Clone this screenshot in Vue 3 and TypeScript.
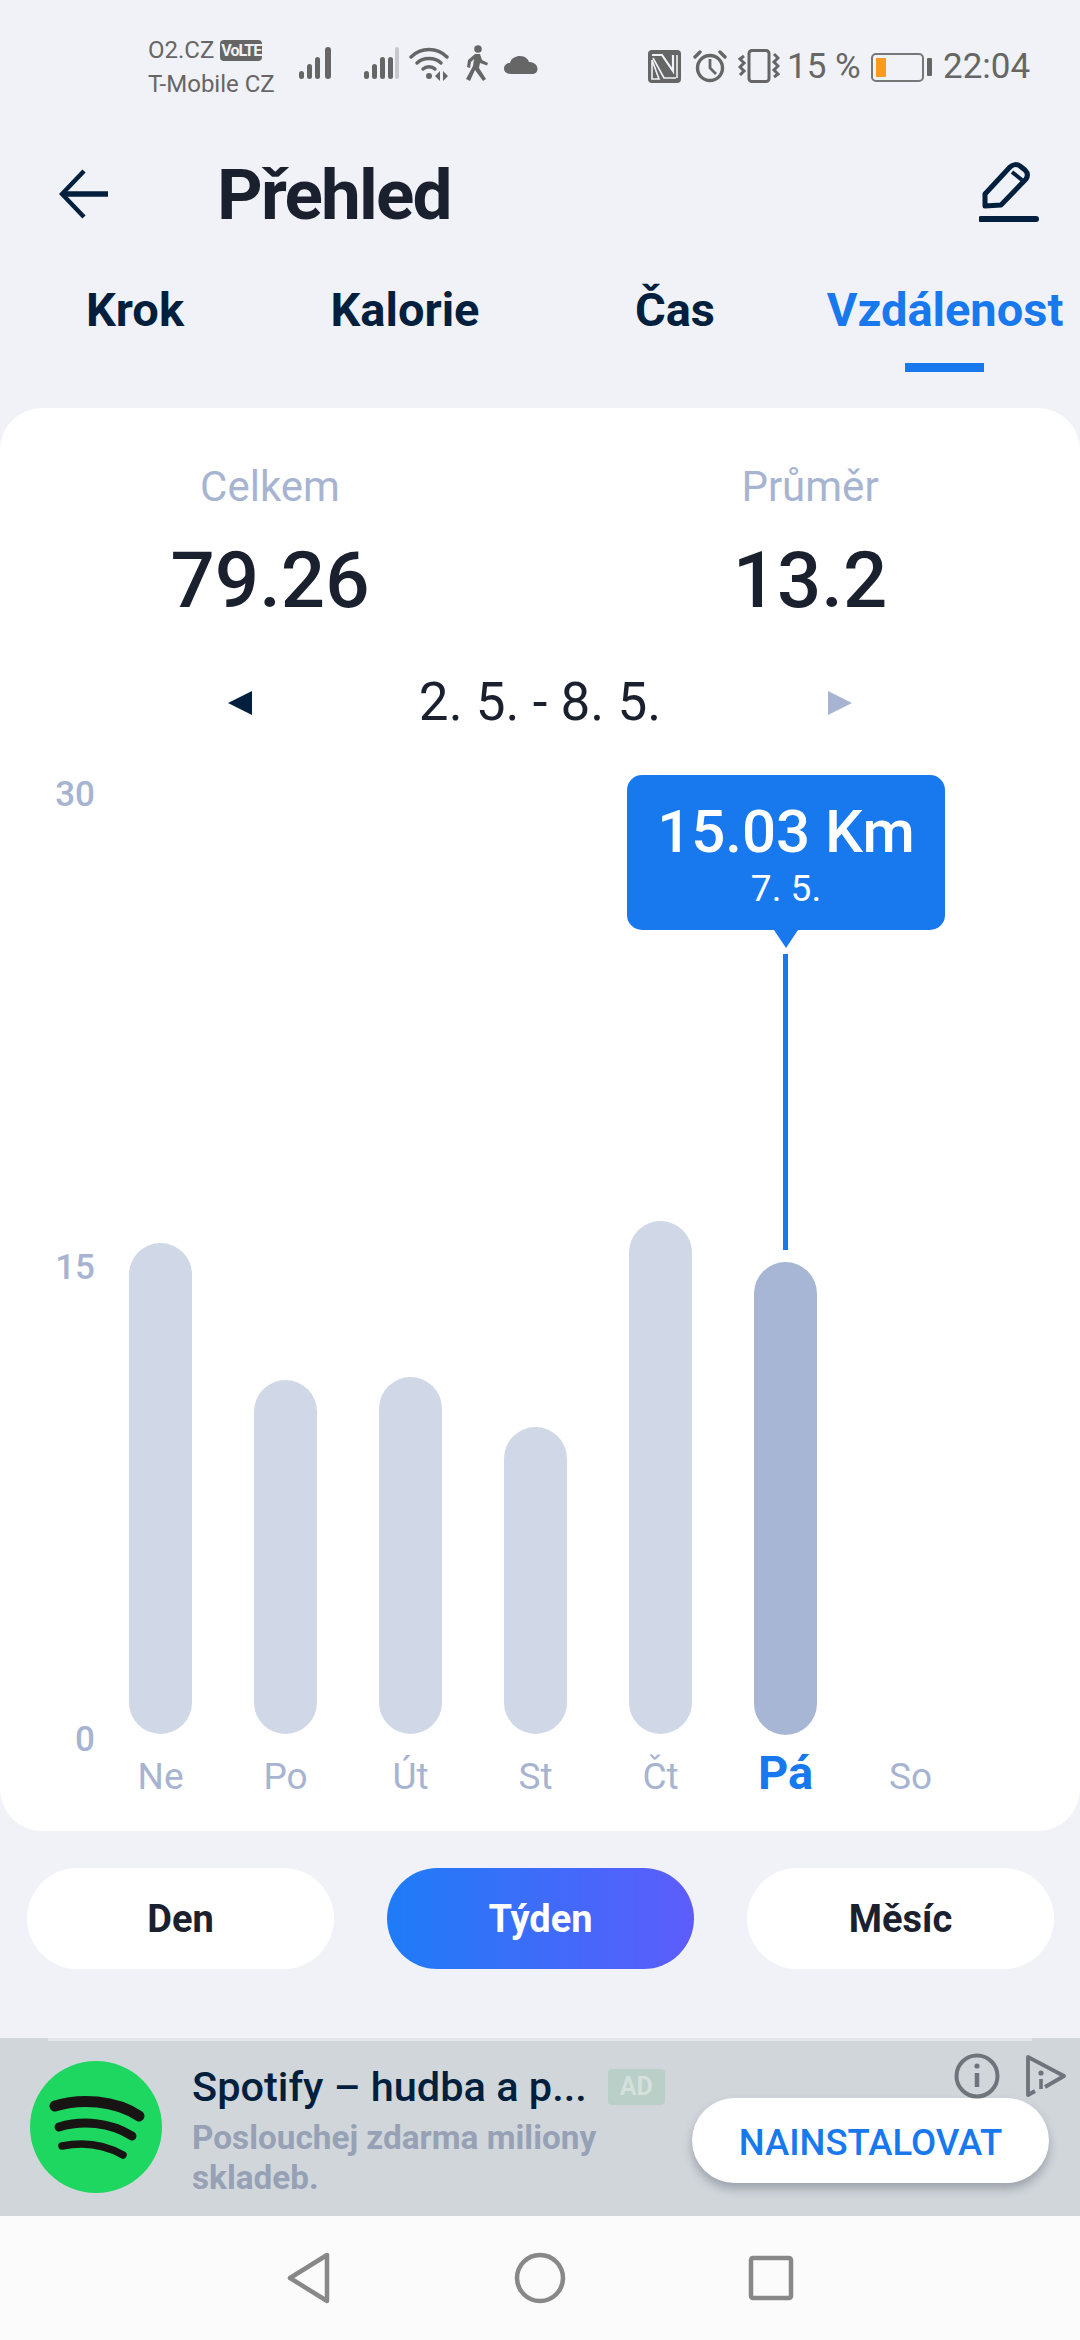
<script setup lang="ts">
interface Day { label: string; value: number; active?: boolean }
const pxPerKm = 31.5
const days: Day[] = [
  { label: 'Ne', value: 15.6 },
  { label: 'Po', value: 11.24 },
  { label: 'Út', value: 11.33 },
  { label: 'St', value: 9.76 },
  { label: 'Čt', value: 16.3 },
  { label: 'Pá', value: 15.03, active: true },
  { label: 'So', value: 0 },
]
const tabs = ['Krok', 'Kalorie', 'Čas', 'Vzdálenost']
const ranges = ['Den', 'Týden', 'Měsíc']
</script>

<template>
  <div class="page">
    <div class="status">
      <div class="carrier">
        <div class="carrier-top"><span>O2.CZ</span><b class="volte">VoLTE</b></div>
        <div class="carrier-bottom">T-Mobile CZ</div>
      </div>
      <svg class="sig sig1" width="36" height="34" viewBox="0 0 36 34" fill="#666">
        <rect x="0" y="25" width="5" height="8" rx="2.5"/><rect x="8" y="18" width="5" height="15" rx="2.5"/><rect x="16" y="11" width="5" height="22" rx="2.5"/><rect x="26" y="1" width="6" height="32" rx="3"/>
      </svg>
      <svg class="sig sig2" width="36" height="34" viewBox="0 0 36 34" fill="#666">
        <rect x="0" y="25" width="5" height="8" rx="2.5"/><rect x="8" y="18" width="5" height="15" rx="2.5"/><rect x="16" y="11" width="5" height="22" rx="2.5"/><rect x="31" y="1" width="4" height="32" rx="2" fill="#c6c8cc"/><rect x="24" y="11" width="5" height="22" rx="2.5"/>
      </svg>
      <svg class="wifi" width="40" height="34" viewBox="0 0 40 34" fill="none" stroke="#666" stroke-width="3.4" stroke-linecap="round">
        <path d="M2 10 C12 0 28 0 38 10"/>
        <path d="M8 16 C14 10 26 10 32 16"/>
        <path d="M14 22 C17 19 23 19 26 22"/>
        <circle cx="20" cy="29" r="3" fill="#666" stroke="none"/>
        <path d="M31 24 L26 29 L31 34 Z M34 24 L39 29 L34 34 Z" fill="#666" stroke="none"/>
      </svg>
      <svg class="walk" width="24" height="36" viewBox="0 0 24 36" fill="#666">
        <circle cx="13" cy="4" r="3.8"/>
        <path d="M10 9 L15 9 L17 15 L23 18 L22 20.5 L15 18 L14 23 L21 34 L18 36 L10 25 L5 36 L1 34 L8 21 L9 14 L6 17 L5 23 L2 22 L3 15 Z"/>
      </svg>
      <svg class="cloud" width="34" height="20" viewBox="0 0 34 20" fill="#666">
        <path d="M7 19 C2 19 0 16 0 13.500 C0 10 3 8 6 8 C7 3 12 1 16 1 C21 1 24 4 25 7 C30 7 33.500 10 33.500 14 C33.500 17 31 19 28 19 Z"/>
      </svg>
      <svg class="nfc" width="33" height="33" viewBox="0 0 33 33" fill="none">
        <rect width="33" height="33" rx="4" fill="#666"/>
        <path d="M4 5 H14 L25 21 V5" stroke="#f0f2f7" stroke-width="2.200"/>
        <path d="M5 8 L16 28 H28 M29 5 V28" stroke="#f0f2f7" stroke-width="1.600"/>
        <path d="M4 10 V29 H11 L4 10" stroke="#f0f2f7" stroke-width="1.600"/>
      </svg>
      <svg class="alarm" width="34" height="34" viewBox="0 0 34 34" fill="none" stroke="#666" stroke-width="3.400">
        <circle cx="17" cy="19" r="12.500"/>
        <path d="M17 10 V19 L23 25" stroke-width="2.800"/>
        <path d="M2 8 L7 3 M32 8 L27 3" stroke-linecap="round"/>
      </svg>
      <svg class="vibrate" width="42" height="34" viewBox="0 0 42 34" fill="none" stroke="#666">
        <rect x="11" y="1.500" width="20" height="31" rx="3" stroke-width="3"/>
        <path d="M6 7 L2 10 L6 14 L2 18 L6 22 L2 26" stroke-width="3"/>
        <path d="M36 5 L40 9 L36 13 L40 17 L36 21 L40 25 L36 28" stroke-width="3"/>
      </svg>
      <span class="pct">15 %</span>
      <div class="battery"><div class="battery-fill"></div></div>
      <div class="nub"></div>
      <span class="time">22:04</span>
    </div>

    <header class="header">
      <svg class="back" width="50" height="50" viewBox="0 0 50 50" fill="none" stroke="#021f3d" stroke-width="5.500">
        <path d="M49 25 H4"/>
        <path d="M25 2 L3 25 L25 48" stroke-width="4.500"/>
      </svg>
      <h1 class="title">Přehled</h1>
      <svg class="pen" width="60" height="62" viewBox="0 0 60 62" fill="none" stroke="#021f3d" stroke-width="5" stroke-linejoin="round">
        <path d="M6 33 L31 6 C34 3 38 3 41 5 L46 9 C49 12 49 15 47 18 L22 44 L6 45 Z"/>
        <path d="M33 11 L43 19" stroke-width="4"/>
        <path d="M2 58 H57" stroke-width="6" stroke-linecap="round"/>
      </svg>
    </header>

    <nav class="tabs">
      <div v-for="t in tabs" :key="t" class="tab" :class="{ on: t === 'Vzdálenost' }">
        <span>{{ t }}</span>
        <i v-if="t === 'Vzdálenost'" class="tab-line"></i>
      </div>
    </nav>

    <section class="card">
      <div class="stats">
        <div class="stat"><div class="stat-label">Celkem</div><div class="stat-value">79.26</div></div>
        <div class="stat"><div class="stat-label">Průměr</div><div class="stat-value">13.2</div></div>
      </div>
      <div class="dates">
        <i class="tri tri-left"></i>
        <span>2. 5. - 8. 5.</span>
        <i class="tri tri-right"></i>
      </div>
      <div class="chart">
        <div class="axis"><span>30</span><span>15</span><span>0</span></div>
        <div class="cols">
          <div v-for="d in days" :key="d.label" class="col" :class="{ on: d.active }">
            <div class="bar-slot">
              <div v-if="d.value" class="bar" :style="{ height: d.value * pxPerKm + 'px' }"></div>
            </div>
            <div class="day">{{ d.label }}</div>
          </div>
        </div>
        <div class="tip">
          <div class="tip-main">15.03 Km</div>
          <div class="tip-sub">7. 5.</div>
          <i class="tip-arrow"></i>
        </div>
        <i class="tip-line"></i>
      </div>
    </section>

    <div class="ranges">
      <div v-for="r in ranges" :key="r" class="range" :class="{ on: r === 'Týden' }">{{ r }}</div>
    </div>

    <aside class="ad">
      <i class="ad-rule"></i>
      <svg class="spotify" width="132" height="132" viewBox="0 0 132 132" fill="none" stroke="#191414" stroke-linecap="round">
        <circle cx="66" cy="66" r="66" fill="#1ed760" stroke="none"/>
        <path d="M25 45 C50 37 85 39 109 55" stroke-width="11"/>
        <path d="M29 66 C52 59 80 61 102 75" stroke-width="9"/>
        <path d="M32 85 C52 81 72 82 93 94" stroke-width="7.500"/>
      </svg>
      <div class="ad-text">
        <div class="ad-title"><span>Spotify – hudba a p...</span><b class="ad-badge">AD</b></div>
        <div class="ad-sub">Poslouchej zdarma miliony skladeb.</div>
      </div>
      <div class="install">NAINSTALOVAT</div>
      <svg class="info" width="46" height="46" viewBox="0 0 46 46" fill="none" stroke="#6e737c" stroke-width="4">
        <circle cx="23" cy="23" r="20.500"/>
        <path d="M23 20 V34" stroke-width="4.500"/>
        <circle cx="23" cy="13" r="2.600" fill="#6e737c" stroke="none"/>
      </svg>
      <svg class="choice" width="42" height="44" viewBox="0 0 42 44" fill="none" stroke="#6e737c" stroke-width="3.800" stroke-linejoin="round">
        <path d="M10 37 L3 41 V3 L39 22 L20 33"/>
        <path d="M16 25 V35" stroke-width="3.600"/>
        <circle cx="16" cy="19" r="2.600" fill="#6e737c" stroke="none"/>
      </svg>
    </aside>

    <footer class="nav">
      <svg width="46" height="52" viewBox="0 0 46 52" fill="none" stroke="#888" stroke-width="4.500" stroke-linejoin="round"><path d="M41 3 V49 L4 26 Z"/></svg>
      <svg width="52" height="52" viewBox="0 0 52 52" fill="none" stroke="#888" stroke-width="4.500"><circle cx="26" cy="26" r="23"/></svg>
      <svg width="46" height="46" viewBox="0 0 46 46" fill="none" stroke="#888" stroke-width="4.500" stroke-linejoin="round"><rect x="3" y="3" width="40" height="40" rx="2"/></svg>
    </footer>
  </div>
</template>

<style scoped>
.page {
  position: relative;
  width: 1080px;
  height: 2340px;
  overflow: hidden;
  background: #f0f2f7;
  font-family: Roboto, "Liberation Sans", sans-serif;
  color: #1a202e;
  display: flex;
  flex-direction: column;
}
.status {
  height: 130px;
  box-sizing: border-box;
  padding: 0 0 0 148px;
  display: flex;
  align-items: center;
  color: #666;
}
.status svg { flex: none; }
.carrier { width: 151px; font-size: 24px; line-height: 34px; margin-top: 4px; }
.carrier-top { display: flex; align-items: center; gap: 6px; }
.volte {
  background: #666;
  color: #f0f2f7;
  font-size: 16px;
  font-weight: 700;
  line-height: 21px;
  height: 21px;
  width: 42px;
  text-align: center;
  border-radius: 4px;
  letter-spacing: -1px;
  overflow: hidden;
  white-space: nowrap;
}
.sig { margin-top: -4px; }
.sig2 { margin-left: 29px; }
.wifi { margin-left: 9px; margin-top: -2px; }
.walk { margin-left: 16px; margin-top: -4px; }
.cloud { margin-left: 15px; margin-top: -1px; }
.nfc { margin-left: 110px; margin-top: 2px; }
.alarm { margin-left: 12px; margin-top: 2px; }
.vibrate { margin-left: 11px; margin-top: 2px; }
.pct { margin-left: 7px; font-size: 35px; margin-top: 2px; width: 76px; white-space: nowrap; }
.battery {
  width: 53px;
  height: 29px;
  box-sizing: border-box;
  border: 2px solid #777;
  border-radius: 5px;
  padding: 3px;
  margin-left: 8px;
  margin-top: 4px;
}
.battery-fill { width: 10px; height: 100%; background: #fb9a1b; }
.nub { width: 5px; height: 18px; background: #666; margin-left: 3px; margin-top: 4px; border-radius: 1px; }
.time { margin-left: 11px; font-size: 35px; margin-top: 2px; }

.header {
  height: 128px;
  box-sizing: border-box;
  position: relative;
  display: flex;
  align-items: center;
  padding: 0 41px 0 59px;
  flex: none;
}
.pen { margin-top: -4px; }
.title {
  margin: 0 0 0 108px;
  font-size: 71px;
  font-weight: 700;
  letter-spacing: -1.8px;
  flex: 1;
  color: #1a202e;
  line-height: 1;
}
.tabs {
  height: 150px;
  display: grid;
  grid-template-columns: repeat(4, 270px);
  flex: none;
}
.tab {
  position: relative;
  text-align: center;
  font-size: 47px;
  font-weight: 700;
  color: #021f3d;
  line-height: 50px;
  padding-top: 27px;
  white-space: nowrap;
}
.tab.on { color: #1878ee; }
.tab-line {
  position: absolute;
  left: 95px;
  top: 105px;
  width: 79px;
  height: 9px;
  background: #1878ee;
}
.card {
  flex: none;
  height: 1423px;
  box-sizing: border-box;
  background: #fff;
  border-radius: 42px;
  display: flex;
  flex-direction: column;
}
.stats {
  display: grid;
  grid-template-columns: 540px 540px;
  padding-top: 56px;
}
.stat { text-align: center; }
.stat-label { font-size: 42px; line-height: 46px; color: #a7b4d1; }
.stat-value { font-size: 78px; font-weight: 500; line-height: 90px; margin-top: 26px; color: #1a202e; }
.dates {
  margin-top: 46px;
  height: 60px;
  display: flex;
  align-items: center;
  justify-content: center;
  font-size: 53px;
  color: #1a202e;
}
.dates span { width: 576px; text-align: center; }
.tri { width: 0; height: 0; border-top: 12px solid transparent; border-bottom: 12px solid transparent; margin-top: 2px; }
.tri-left { border-right: 24px solid #021f3d; }
.tri-right { border-left: 24px solid #a7b4d1; }
.chart {
  position: relative;
  display: flex;
  margin-top: 41px;
  height: 1026px;
}
.axis {
  width: 95px;
  height: 985px;
  margin-top: 2px;
  text-align: right;
  display: flex;
  flex-direction: column;
  justify-content: space-between;
  font-size: 35px;
  font-weight: 500;
  line-height: 40px;
  color: #a7b4d1;
  flex: none;
}
.cols { display: flex; margin-left: 3px; }
.col { width: 125px; display: flex; flex-direction: column; align-items: center; }
.bar-slot { height: 962px; width: 63px; display: flex; align-items: flex-end; }
.bar { width: 63px; background: #d0d7e6; border-radius: 32px; }
.col.on .bar { background: #a8b6d6; }
.day {
  font-size: 37px;
  line-height: 44px;
  margin-top: 21px;
  color: #a7b4d1;
}
.col.on .day { color: #1878ee; font-size: 47px; font-weight: 700; margin-top: 15px; line-height: 46px; }
.tip {
  position: absolute;
  left: 627px;
  top: 2px;
  width: 318px;
  height: 155px;
  box-sizing: border-box;
  background: #1878ee;
  border-radius: 15px;
  color: #fff;
  text-align: center;
}
.tip-main { font-size: 60px; font-weight: 500; line-height: 68px; padding-top: 23px; }
.tip-sub { font-size: 37px; line-height: 42px; margin-top: 2px; }
.tip-arrow {
  position: absolute;
  left: 147px;
  top: 155px;
  width: 0;
  height: 0;
  border-left: 12px solid transparent;
  border-right: 12px solid transparent;
  border-top: 18px solid #1878ee;
}
.tip-line { position: absolute; left: 783px; top: 181px; width: 5px; height: 296px; background: #1878ee; }

.ranges {
  flex: none;
  display: grid;
  grid-template-columns: repeat(3, 307px);
  gap: 53px;
  padding: 37px 0 0 27px;
  height: 207px;
  box-sizing: border-box;
}
.range {
  height: 101px;
  background: #fff;
  border-radius: 51px;
  display: flex;
  align-items: center;
  justify-content: center;
  font-size: 38px;
  font-weight: 700;
  color: #1a202e;
}
.range.on { background: linear-gradient(90deg, #1e7cf7, #5d5cfb); color: #fff; }

.ad {
  position: relative;
  flex: none;
  height: 178px;
  background: #d1d6db;
  display: flex;
  align-items: center;
}
.ad-rule { position: absolute; left: 48px; top: 0; width: 984px; height: 3px; background: #e2e6ec; }
.spotify { margin-left: 30px; flex: none; }
.ad-text { margin-left: 30px; width: 480px; margin-top: 3px; }
.ad-title { display: flex; align-items: center; font-size: 41.500px; font-weight: 500; color: #021f3d; line-height: 56px; white-space: nowrap; }
.ad-badge {
  margin-left: 21px;
  width: 57px;
  height: 36px;
  background: #b9cfc7;
  color: #d5dfdc;
  border-radius: 4px;
  font-size: 25px;
  font-weight: 700;
  line-height: 36px;
  text-align: center;
}
.ad-sub { width: 440px; font-size: 33.300px; font-weight: 700; line-height: 40px; color: #97a1b5; margin-top: 3px; }
.install {
  position: absolute;
  left: 692px;
  top: 60px;
  width: 357px;
  height: 85px;
  box-sizing: border-box;
  padding-top: 3px;
  background: #fff;
  border-radius: 43px;
  box-shadow: 0 6px 10px rgba(60, 70, 85, 0.35);
  color: #1878ee;
  font-size: 36.500px;
  font-weight: 500;
  display: flex;
  align-items: center;
  justify-content: center;
}
.info { position: absolute; left: 954px; top: 15px; }
.choice { position: absolute; left: 1025px; top: 16px; }
.nav {
  flex: none;
  height: 124px;
  background: #fbfbfb;
  display: flex;
  align-items: center;
  padding-left: 286px;
}
.nav svg:nth-child(2) { margin-left: 182px; }
.nav svg:nth-child(3) { margin-left: 182px; }
</style>

<style>
html, body { margin: 0; padding: 0; }
</style>
